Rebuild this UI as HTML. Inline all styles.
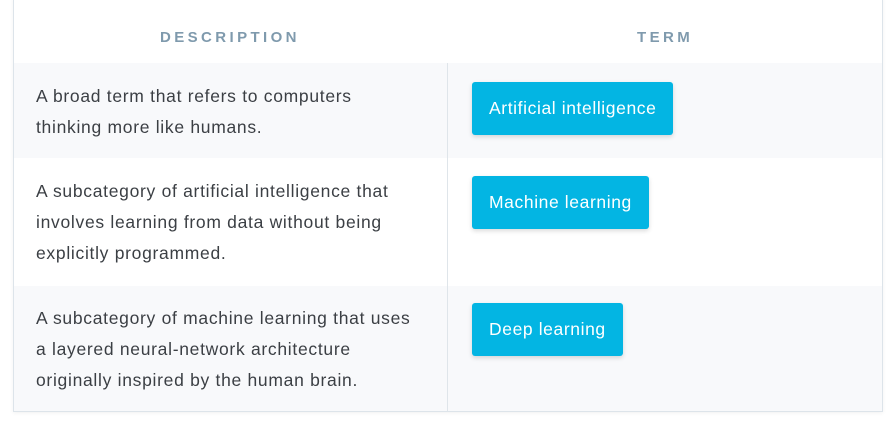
<!DOCTYPE html>
<html><head><style>
body{margin:0;width:894px;height:423px;background:#fff;font-family:"Liberation Sans",sans-serif;overflow:hidden;position:relative}
.card{position:absolute;left:13px;top:-2px;width:868px;height:413px;border:1px solid #dde4ea;border-top:none;background:#fff;box-shadow:0 1px 4px rgba(0,0,0,0.06)}
.h{position:absolute;top:31px;font-size:15px;font-weight:bold;letter-spacing:3.4px;color:#7f9aad}
.row{position:absolute;left:0;width:868px}
.d{position:absolute;left:22px;font-size:17.5px;letter-spacing:0.7px;line-height:31px;color:#3b3f44;white-space:nowrap}
.b{position:absolute;left:458px;height:53px;line-height:53px;padding:0 17px;background:#03b5e3;color:#fff;font-size:17.5px;letter-spacing:0.6px;border-radius:3px;box-shadow:0 2px 5px rgba(0,0,0,0.15);white-space:nowrap}
.div{position:absolute;left:433px;top:65px;width:1px;height:348px;background:#dfe5ea}
</style></head><body>
<div class="card">
<div class="h" style="left:146px">DESCRIPTION</div>
<div class="h" style="left:623px">TERM</div>
<div class="row" style="top:65px;height:95px;background:#f8f9fb">
<div class="d" style="top:18px">A broad term that refers to computers<br>thinking more like humans.</div>
<div class="b" style="top:19px">Artificial intelligence</div></div>
<div class="row" style="top:160px;height:128px;background:#fff">
<div class="d" style="top:18px">A subcategory of artificial intelligence that<br>involves learning from data without being<br>explicitly programmed.</div>
<div class="b" style="top:18px">Machine learning</div></div>
<div class="row" style="top:288px;height:125px;background:#f8f9fb">
<div class="d" style="top:17px">A subcategory of machine learning that uses<br>a layered neural-network architecture<br>originally inspired by the human brain.</div>
<div class="b" style="top:17px">Deep learning</div></div>
<div class="div"></div>
</div>
</body></html>
